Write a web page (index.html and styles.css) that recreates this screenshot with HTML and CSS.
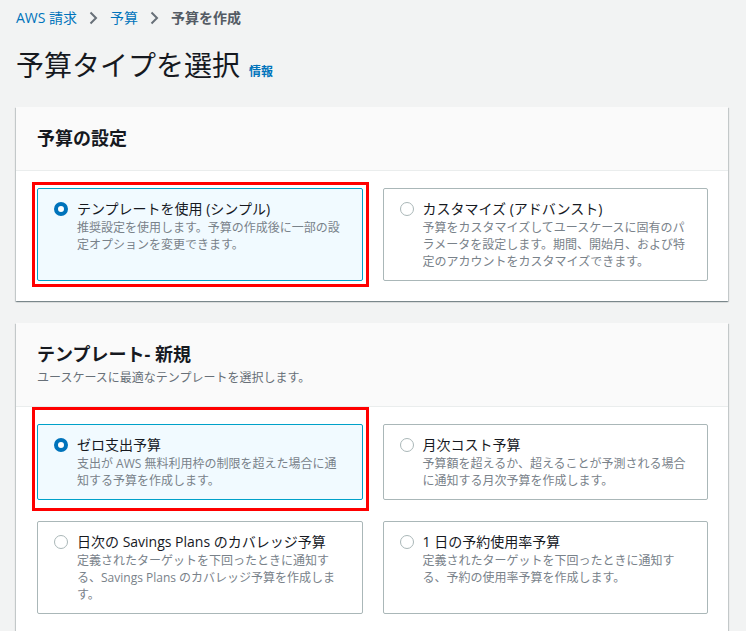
FILE: index.html
```html
<!DOCTYPE html>
<html lang="ja">
<head>
<meta charset="utf-8">
<title>予算タイプを選択</title>
<link rel="stylesheet" href="styles.css">
</head>
<body>
<div class="page">
  <nav class="crumbs">
    <a class="crumb-link" href="#">AWS 請求</a>
    <svg class="sep" width="9" height="14" viewBox="0 0 9 14"><path d="M1.5 1.5 L7 7 L1.5 12.5" fill="none" stroke="#687078" stroke-width="2"/></svg>
    <a class="crumb-link" href="#">予算</a>
    <svg class="sep" width="9" height="14" viewBox="0 0 9 14"><path d="M1.5 1.5 L7 7 L1.5 12.5" fill="none" stroke="#687078" stroke-width="2"/></svg>
    <span class="current">予算を作成</span>
  </nav>

  <h1 class="title">予算タイプを選択 <a class="info" href="#">情報</a></h1>

  <section class="panel">
    <header class="panel-head">
      <h2>予算の設定</h2>
    </header>
    <div class="panel-body">
      <label class="tile selected">
        <span class="radio on"></span>
        <span class="tile-text">
          <span class="tile-title">テンプレートを使用 (シンプル)</span>
          <span class="tile-desc">推奨設定を使用します。予算の作成後に一部の設定オプションを変更できます。</span>
        </span>
        <span class="mark mark-a"></span>
      </label>
      <label class="tile">
        <span class="radio"></span>
        <span class="tile-text">
          <span class="tile-title">カスタマイズ (アドバンスト)</span>
          <span class="tile-desc">予算をカスタマイズしてユースケースに固有のパラメータを設定します。期間、開始月、および特定のアカウントをカスタマイズできます。</span>
        </span>
      </label>
    </div>
  </section>

  <section class="panel">
    <header class="panel-head">
      <h2>テンプレート- 新規</h2>
      <p class="panel-sub">ユースケースに最適なテンプレートを選択します。</p>
    </header>
    <div class="panel-body">
      <label class="tile selected">
        <span class="radio on"></span>
        <span class="tile-text">
          <span class="tile-title">ゼロ支出予算</span>
          <span class="tile-desc">支出が AWS 無料利用枠の制限を超えた場合に通知する予算を作成します。</span>
        </span>
        <span class="mark mark-b"></span>
      </label>
      <label class="tile">
        <span class="radio"></span>
        <span class="tile-text">
          <span class="tile-title">月次コスト予算</span>
          <span class="tile-desc">予算額を超えるか、超えることが予測される場合に通知する月次予算を作成します。</span>
        </span>
      </label>
      <label class="tile">
        <span class="radio"></span>
        <span class="tile-text">
          <span class="tile-title">日次の Savings Plans のカバレッジ予算</span>
          <span class="tile-desc">定義されたターゲットを下回ったときに通知する、Savings Plans のカバレッジ予算を作成します。</span>
        </span>
      </label>
      <label class="tile">
        <span class="radio"></span>
        <span class="tile-text">
          <span class="tile-title">1 日の予約使用率予算</span>
          <span class="tile-desc">定義されたターゲットを下回ったときに通知する、予約の使用率予算を作成します。</span>
        </span>
      </label>
    </div>
  </section>
</div>
</body>
</html>
```

FILE: styles.css
```css
html, body {
  margin: 0;
  background: #f2f3f3;
}

body {
  font-family: "Open Sans", "Noto Sans CJK JP", sans-serif;
  color: #16191f;
}

.page {
  padding: 8px 18px 0 16px;
}

.crumbs {
  display: flex;
  align-items: center;
  height: 20px;
  font-size: 14px;
  line-height: 20px;
}

.crumb-link {
  color: #0073bb;
  text-decoration: none;
}

.sep {
  margin: 0 12px;
  flex: none;
}

.current {
  color: #545b64;
  font-weight: 700;
}

.title {
  display: flex;
  align-items: baseline;
  gap: 9px;
  height: 36px;
  margin: 19px 0 0;
  font-size: 28px;
  line-height: 36px;
  font-weight: 400;
}

.info {
  font-size: 12px;
  line-height: 16px;
  font-weight: 700;
  color: #0073bb;
  text-decoration: none;
}

.panel {
  margin-top: 24px;
  background: #fff;
  box-shadow: 0 1px 1px 0 rgba(0, 28, 36, 0.3), 1px 1px 1px 0 rgba(0, 28, 36, 0.15), -1px 1px 1px 0 rgba(0, 28, 36, 0.15);
}

.panel + .panel {
  margin-top: 22px;
}

.panel-head {
  background: #fafafa;
  border-bottom: 1px solid #eaeded;
  padding: 19px 20px 20px 21px;
}

.panel-head h2 {
  margin: 0;
  font-size: 18px;
  line-height: 24px;
  font-weight: 700;
}

.panel-sub {
  margin: 3px 0 0;
  font-size: 12px;
  line-height: 17px;
  color: #687078;
}

.panel-body {
  display: grid;
  grid-template-columns: 1fr 1fr;
  column-gap: 20px;
  row-gap: 21px;
  padding: 17px 20px 20px 21px;
}

.tile {
  position: relative;
  display: flex;
  align-items: flex-start;
  gap: 9px;
  border: 1px solid #aab7b8;
  border-radius: 2px;
  padding: 10px 15px 10px 16px;
  background: #fff;
}

.tile.selected {
  background: #f1faff;
  border-color: #00a1c9;
}

.radio {
  flex: none;
  box-sizing: border-box;
  width: 14px;
  height: 14px;
  margin-top: 3px;
  border-radius: 50%;
  border: 1.5px solid #aab7b8;
  background: #fff;
}

.radio.on {
  border: 4px solid #0073bb;
}

.tile-text {
  flex: 1;
  min-width: 0;
}

.tile-title {
  display: block;
  font-size: 14px;
  line-height: 20px;
  color: #16191f;
}

.tile-desc {
  display: block;
  font-size: 12px;
  line-height: 17px;
  color: #79828a;
}

.mark {
  position: absolute;
  box-sizing: border-box;
  border: 3px solid #ff0000;
  pointer-events: none;
}

.mark-a {
  top: -7px;
  bottom: -7px;
  left: -6px;
  right: -7px;
}

.mark-b {
  top: -18px;
  bottom: -12px;
  left: -6px;
  right: -7px;
}
```
